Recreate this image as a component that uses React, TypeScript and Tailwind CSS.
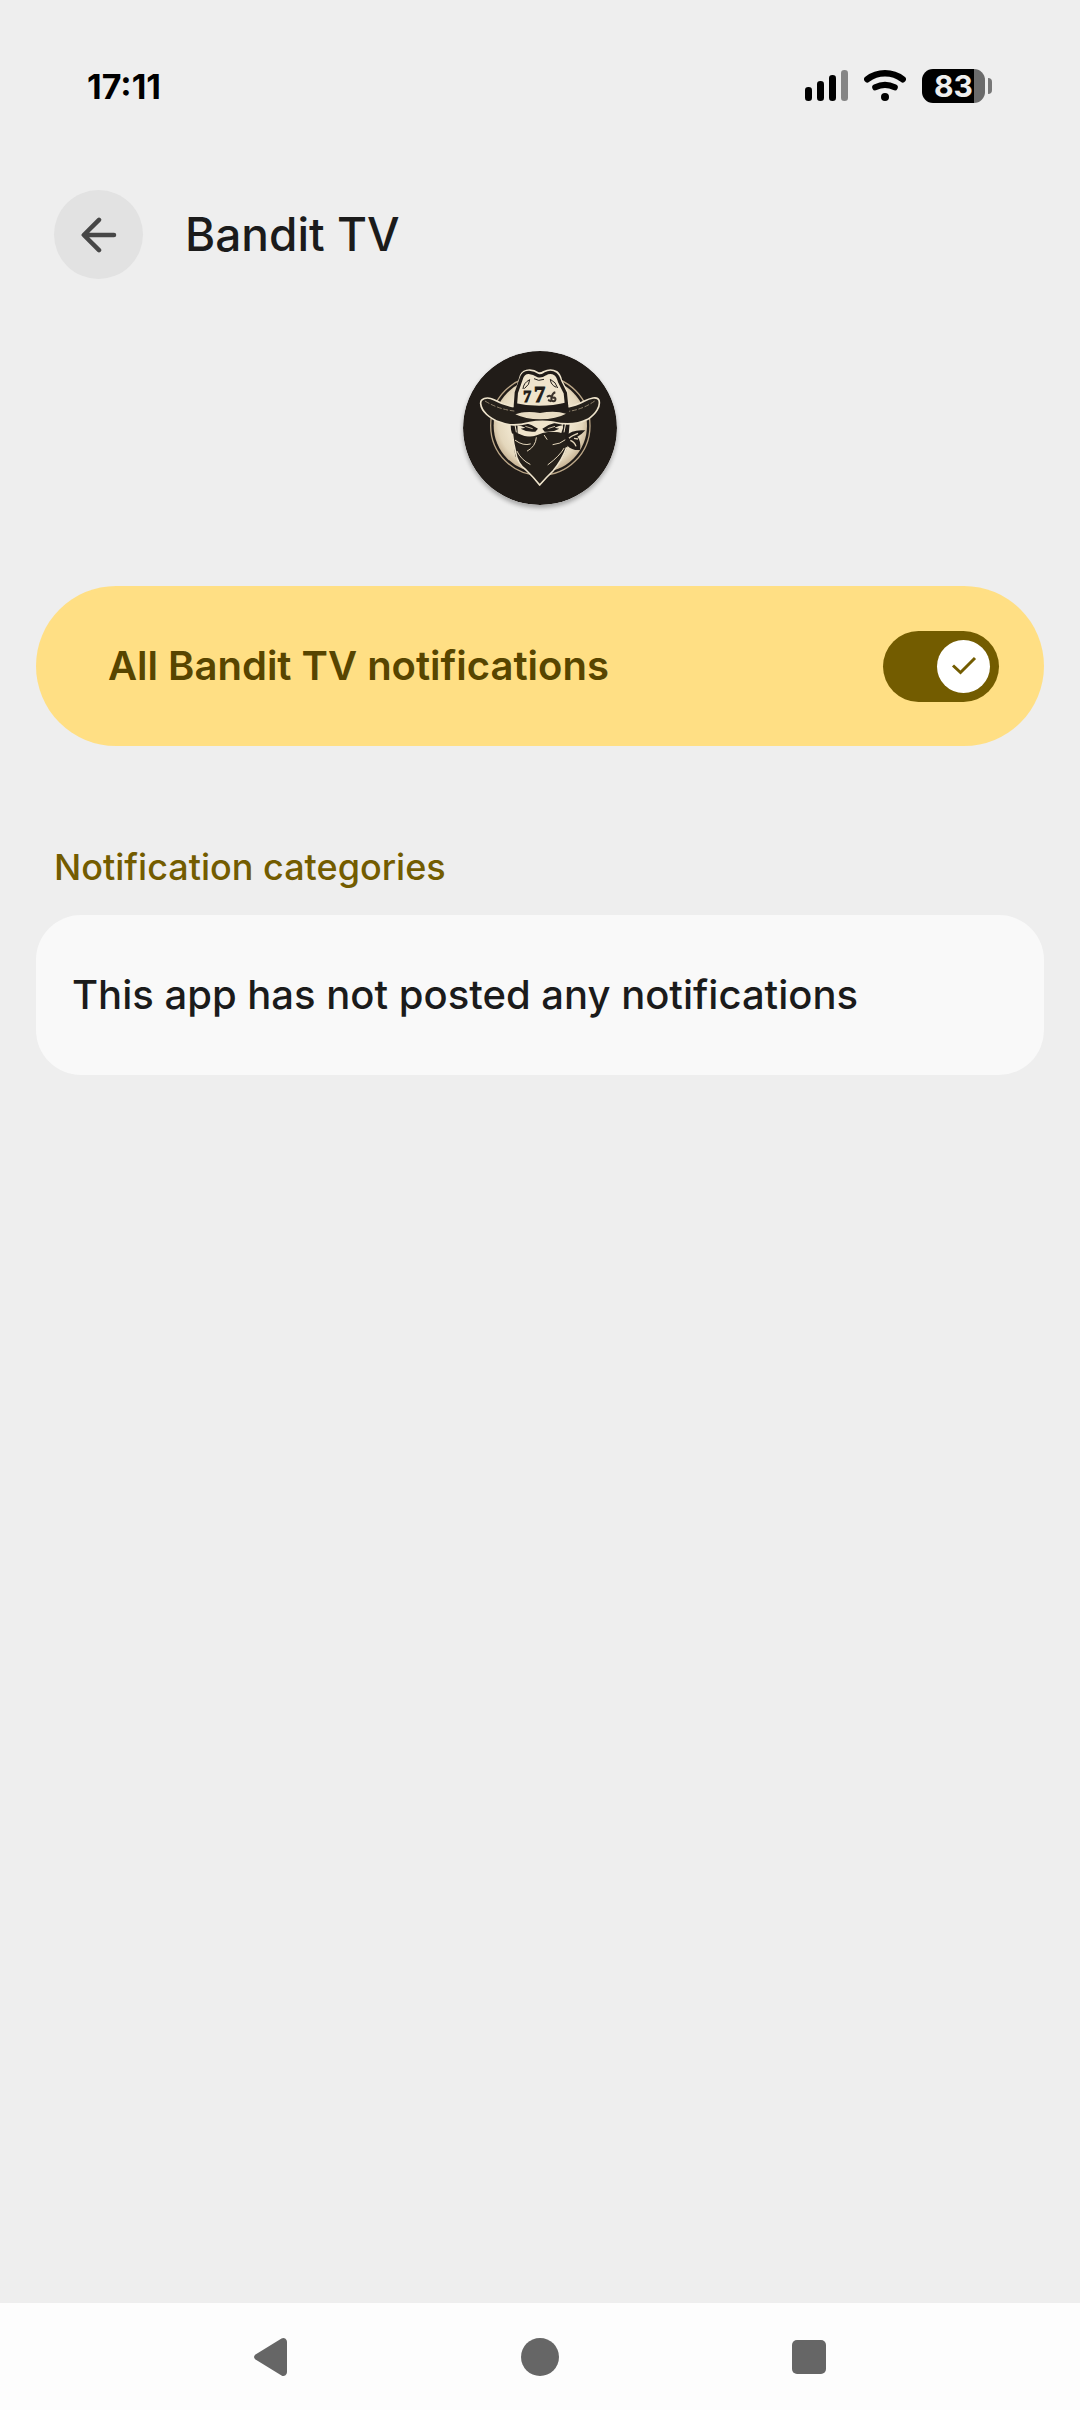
import { useState } from 'react';

const BARS = [
  { x: 0, y: 18, height: 14, color: '#000000' },
  { x: 12, y: 12, height: 20, color: '#000000' },
  { x: 24, y: 6, height: 26, color: '#000000' },
  { x: 36, y: 1, height: 31, color: '#858585' },
];

function StatusBar() {
  return (
    <div className="flex h-[172px] items-center justify-between pl-[87px] pr-[88px]">
      <time className="text-[34px] font-bold text-black">17:11</time>
      <div className="flex items-center gap-4">
        <svg width="43" height="34" viewBox="0 0 43 34" role="img" aria-label="Mobile signal">
          {BARS.map((bar) => (
            <rect key={bar.x} x={bar.x} y={bar.y} width="7" height={bar.height} rx="3.3" fill={bar.color} />
          ))}
        </svg>
        <svg width="42" height="34" viewBox="0 0 42 34" fill="none" stroke="#000000" strokeLinecap="round" role="img" aria-label="Wi-Fi">
          <path d="M3.3 10.3Q11 4.3 21 4.3t17.700 6" strokeWidth="6.400" />
          <path d="M11.300 18.300q9.700-4.700 19.400 0" strokeWidth="6.200" />
          <circle cx="21" cy="28" r="4" fill="#000000" stroke="none" />
        </svg>
        <div className="flex items-center gap-[3px]">
          <div className="flex h-[34px] w-[63px] items-center justify-center rounded-[11px] bg-[linear-gradient(90deg,#000_83%,#6b6b6b_83%)] text-3xl font-bold text-[#eeeeee]">
            83
          </div>
          <div className="h-4 w-1 rounded-r-sm bg-[#777777]" />
        </div>
      </div>
    </div>
  );
}

function BanditLogo() {
  return (
    <svg width="154" height="154" viewBox="39 34 462 462" className="rounded-full shadow-[0_3px_4px_rgba(0,0,0,0.3)]" role="img" aria-label="Bandit TV">
      <defs>
        <radialGradient id="moon" cx="270" cy="248" r="148" gradientUnits="userSpaceOnUse">
          <stop offset="0.6" stopColor="#f0e6cf" />
          <stop offset="0.85" stopColor="#e4d7bc" />
          <stop offset="1" stopColor="#c9b596" />
        </radialGradient>
      </defs>
      <circle cx="270" cy="265" r="231" fill="#211c18" />
      <circle cx="271" cy="258" r="149" fill="none" stroke="#bba687" strokeWidth="4" />
      <circle cx="271" cy="258" r="140" fill="url(#moon)" />

      {/* head */}
      <path d="M181 240L183 270L187 285L196 350L222 384L269 437L320 382L350 318L356 284L360 240Z" fill="#211c18" />
      <path d="M202 244C245 246 300 246 338 240L339 265L334 280C312 274 290 277 270 286C250 294 229 294 203 281Z" fill="#efe4cc" />
      <path d="M194 250L199 278M347 250L342 278" stroke="#efe4cc" strokeWidth="3" />
      <path d="M202 257Q210 246 226 250Q248 255 264 267L256 276Q232 279 212 267L226 264Q212 258 202 257Z" fill="#211c18" />
      <path d="M338 257Q330 246 314 250Q292 255 277 267L284 276Q308 279 328 267L314 264Q328 258 338 257Z" fill="#211c18" />
      <path d="M226 260l22 7M315 260l-22 7" fill="none" stroke="#cdbfa5" strokeWidth="3" />

      {/* bandana */}
      <path d="M186 281C213 297 246 294 270 283C294 274 328 276 352 287L354 315C347 343 325 377 306 397L270 437L234 399C213 383 198 356 195 334Z" fill="#25201a" />
      <path d="M187 282Q190 311 196 334Q201 371 228 391Q252 414 269 436Q288 414 309 394Q336 363 350 323" fill="none" stroke="#efe4cc" strokeWidth="5" strokeLinejoin="round" />
      <path d="M196 302Q220 320 241 313M259 294Q257 321 232 334M201 335Q213 360 240 374M294 375Q329 349 342 326M309 315Q330 314 348 299M283 287l8 12" fill="none" stroke="#e4d6bb" strokeWidth="3" strokeLinecap="round" />

      {/* knot */}
      <path d="M346 290Q366 268 406 272Q396 284 382 291Q394 303 390 331Q367 333 352 318Q343 303 346 290Z" fill="#211c18" />
      <path d="M357 296Q365 288 384 281M361 302Q374 307 378 320M372 296l12 2" fill="none" stroke="#e4d6bb" strokeWidth="4" />

      {/* hat */}
      <path d="M196 193L201 150L214 107Q220 94 239 93Q252 93 265 102Q273 104 282 98Q302 88 319 98Q328 104 332 122L349 156L351 197Q315 216 270 215Q226 215 196 193Z" fill="#efe4cc" stroke="#efe4cc" strokeWidth="9" strokeLinejoin="round" />
      <path d="M196 199L199 159L214 116Q220 97 237 98Q251 99 264 108Q274 111 285 103Q302 93 316 103Q324 109 329 126L346 160L350 201" fill="none" stroke="#211c18" strokeWidth="10" strokeLinejoin="round" />
      <path d="M219 148Q220 130 239 120Q240 134 223 147M323 145Q318 127 301 119Q302 136 319 143M252 117l14 5l16-3" fill="none" stroke="#211c18" strokeWidth="3" />
      <path d="M198 202Q165 198 132 180C109 169 91 178 92 192C94 215 119 237 151 248C178 260 215 255 239 249Q270 242 308 247C352 258 385 253 413 239C439 222 452 199 447 182C442 168 419 176 402 185Q379 198 348 203Q333 221 270 223Q213 220 198 202Z" fill="#25201a" stroke="#efe4cc" strokeWidth="5" strokeLinejoin="round" />
      <path d="M194 190Q270 208 352 188L358 213Q332 222 270 220Q211 222 188 212Z" fill="#211c18" />
      <path d="M196 224Q225 213 270 220Q316 212 348 222Q320 238 270 239Q226 239 196 224Z" fill="#e8dcc3" />
      <path d="M105 184Q145 209 193 214M434 184Q401 208 357 215" fill="none" stroke="#8e816b" strokeWidth="3" strokeDasharray="15 5" />
      <g fill="#211c18" fontFamily="'Liberation Serif', serif" fontWeight="700" stroke="#211c18" strokeWidth="3">
        <text x="220" y="188" fontSize="47">7</text>
        <text x="252" y="186" fontSize="67">7</text>
      </g>
      <path d="M291 172q7-7 12-1M316 158q-8 2-11 13q-4 12 5 14q8-1 6-9q-4-5-9 0M294 181l10 4" fill="none" stroke="#3b332b" strokeWidth="6" />
    </svg>
  );
}

function NavBar() {
  return (
    <nav className="flex h-[107px] items-center justify-center gap-[230px] bg-[#fdfdfd] text-[#666666]">
      <button type="button" aria-label="Back" className="cursor-pointer">
        <svg width="40" height="40" viewBox="0 0 40 40" fill="currentColor">
          <path d="M4.500 17.500L30.500 1.600Q32.500 .5 34.500 1.800Q36 3 36 5V35Q36 37 34.500 38.200Q32.500 39.500 30.500 38.400L4.500 22.500Q1.500 20 4.500 17.500Z" />
        </svg>
      </button>
      <button type="button" aria-label="Home" className="cursor-pointer">
        <svg width="38" height="38" viewBox="0 0 38 38" fill="currentColor">
          <circle cx="19" cy="19" r="19" />
        </svg>
      </button>
      <button type="button" aria-label="Recent apps" className="cursor-pointer">
        <svg width="40" height="40" viewBox="0 0 40 40" fill="currentColor">
          <rect x="3" y="3" width="34" height="34" rx="5" />
        </svg>
      </button>
    </nav>
  );
}

export default function App() {
  const [enabled, setEnabled] = useState(true);

  return (
    <div className="flex min-h-screen flex-col bg-[#eeeeee] font-['Inter','Open_Sans',sans-serif] text-[#1b1b1b]">
      <StatusBar />

      <header className="mt-[18px] flex items-center gap-[42px] px-[54px]">
        <button
          type="button"
          aria-label="Navigate up"
          className="flex size-[89px] shrink-0 cursor-pointer items-center justify-center rounded-full bg-[#e2e2e2]"
        >
          <svg width="36" height="36" viewBox="0 0 36 36" fill="none" stroke="#474747" strokeWidth="4.500" strokeLinecap="round" strokeLinejoin="round">
            <path d="M33 18H3M18 2.800L2.800 18L18 33.200" />
          </svg>
        </button>
        <h1 className="text-[46px] font-medium">Bandit TV</h1>
      </header>

      <main className="flex-1 px-9">
        <div className="mt-[72px] flex justify-center">
          <BanditLogo />
        </div>

        <label className="mt-[81px] flex h-40 cursor-pointer items-center justify-between rounded-full bg-[#ffdf84] pl-[72px] pr-[45px]">
          <span className="text-[40px] font-semibold text-[#574500]">All Bandit TV notifications</span>
          <input
            type="checkbox"
            role="switch"
            checked={enabled}
            onChange={(e) => setEnabled(e.target.checked)}
            className="peer sr-only"
          />
          <span className="flex h-[71px] w-[116px] items-center justify-start rounded-full bg-[#a39a80] px-[9px] peer-checked:justify-end peer-checked:bg-[#735c00] peer-focus-visible:ring-4">
            <span className="flex size-[53px] items-center justify-center rounded-full bg-white">
              {enabled && (
                <svg width="26" height="20" viewBox="0 0 26 20" fill="none" stroke="#735c00" strokeWidth="3">
                  <path d="M2 9.500L9.500 16.500L24 2" />
                </svg>
              )}
            </span>
          </span>
        </label>

        <section>
          <h2 className="mb-6 mt-[97px] px-[18px] text-4xl leading-[48px] font-medium text-[#735c00]">
            Notification categories
          </h2>
          <div className="flex h-40 items-center rounded-[45px] bg-[#f9f9f9] px-9">
            <p className="text-[40px] font-medium">This app has not posted any notifications</p>
          </div>
        </section>
      </main>

      <NavBar />
    </div>
  );
}
